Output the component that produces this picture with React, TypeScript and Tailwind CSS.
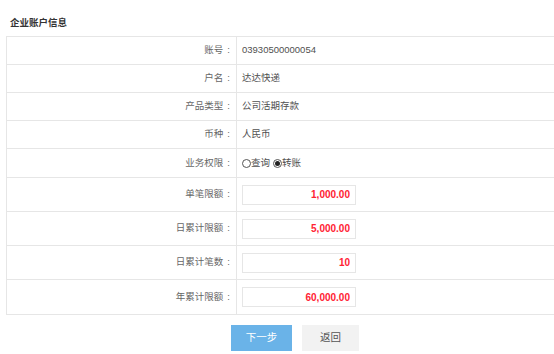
import React from 'react';

const rows = [
    { label: '账号', value: '03930500000054' },
    { label: '户名', value: '达达快递' },
    { label: '产品类型', value: '公司活期存款' },
    { label: '币种', value: '人民币' },
];

const limits = [
    { label: '单笔限额', value: '1,000.00' },
    { label: '日累计限额', value: '5,000.00' },
    { label: '日累计笔数', value: '10' },
    { label: '年累计限额', value: '60,000.00' },
];

const Label = ({ text }: { text: string }) => (
    <div className="w-[230px] shrink-0 h-full flex items-center justify-end border-r border-[#e6e6e6] pr-[6px] text-[#666]">
        {text}
        <span className="ml-[4px]">:</span>
    </div>
);

export default function App() {
    return (
        <div
            className="w-[554px] h-[354px] overflow-hidden bg-white text-[9.5px] text-[#505050]"
            style={{ fontFamily: '"Liberation Sans", "Noto Sans CJK SC", sans-serif' }}
        >
            <h2 className="pl-[10px] pt-[18px] pb-[8px] text-[9.5px] font-bold text-[#333] leading-[10px]">企业账户信息</h2>

            {/* Account table */}
            <div className="ml-[6px] border-t border-b border-l border-[#e6e6e6]">
                {rows.map(r => (
                    <div key={r.label} className="flex items-center h-[28px] border-b border-[#e6e6e6]">
                        <Label text={r.label} />
                        <div className="pl-[5px]">{r.value}</div>
                    </div>
                ))}

                <div className="flex items-center h-[29px] border-b border-[#e6e6e6]">
                    <Label text="业务权限" />
                    <div className="pl-[5px] flex items-center">
                        <span className="w-[9px] h-[9px] rounded-full border border-[#555] bg-white" />
                        <span>查询</span>
                        <span className="ml-[3px] w-[9px] h-[9px] rounded-full border border-[#555] bg-white flex items-center justify-center">
                            <span className="w-[5px] h-[5px] rounded-full bg-[#222]" />
                        </span>
                        <span>转账</span>
                    </div>
                </div>

                {limits.map((r, i) => (
                    <div
                        key={r.label}
                        className={`flex items-center h-[34px] ${i < limits.length - 1 ? 'border-b border-[#e6e6e6]' : ''}`}
                    >
                        <Label text={r.label} />
                        <div className="pl-[5px]">
                            <div className="w-[114px] h-[20px] border border-[#e6e6e6] flex items-center justify-end pr-[5px] text-[10px] font-bold text-[#ff2233]">
                                {r.value}
                            </div>
                        </div>
                    </div>
                ))}
            </div>

            {/* Actions */}
            <div className="flex gap-[10px] pl-[231px] mt-[10px]">
                <button className="w-[61px] h-[26px] bg-[#6ab3e8] text-white text-[10.5px]">下一步</button>
                <button className="w-[57px] h-[26px] bg-[#f2f2f2] text-[#555] text-[10.5px]">返回</button>
            </div>
        </div>
    );
}
